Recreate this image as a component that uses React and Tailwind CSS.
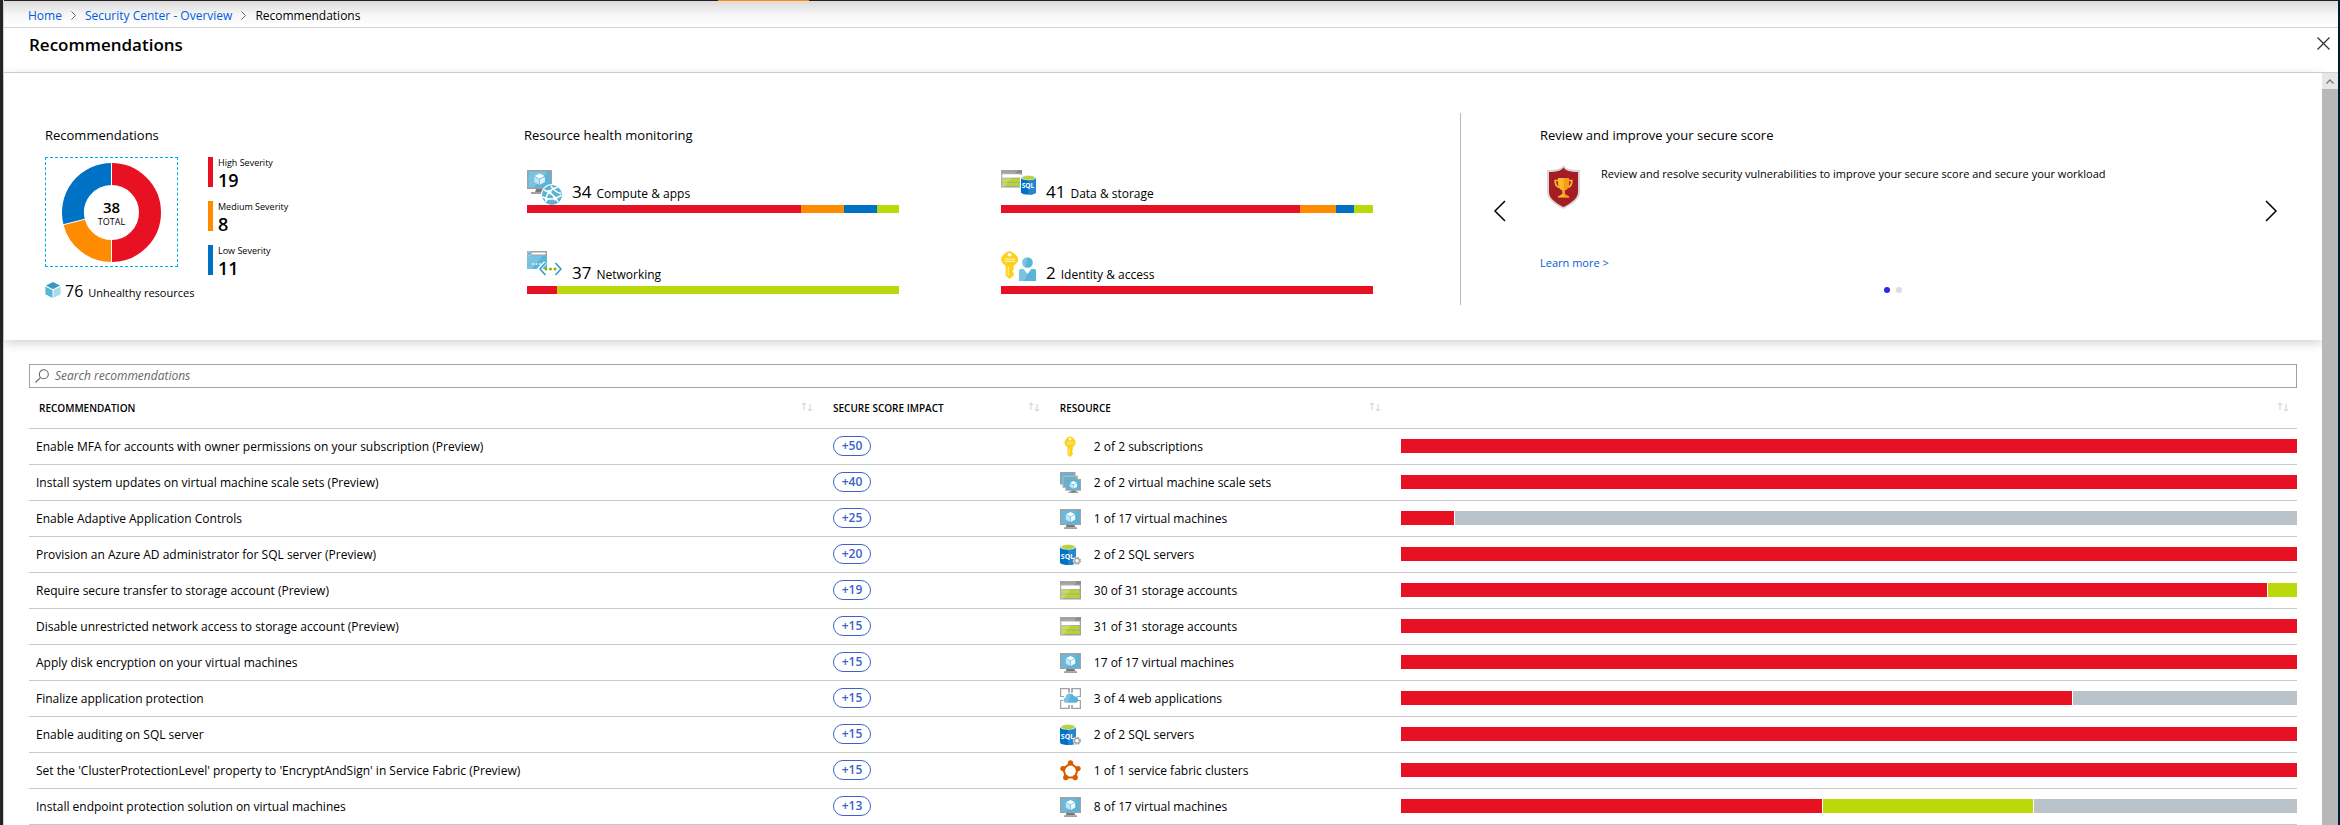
import React from "react";

const RED = "#e81123";
const ORANGE = "#ff8c00";
const BLUE = "#0072c6";
const GREEN = "#bad80a";
const GRAY = "#bac2ca";

function Cube({ x = 0, y = 0, s = 1, top = "#3999c6", left = "#59b4d9", right = "#a8d9ed" }) {
  return (
    <g transform={`translate(${x} ${y}) scale(${s})`}>
      <path d="M8 0L15 3.6L8 7.2L1 3.6Z" fill={top} />
      <path d="M0.4 4.6L7.5 8.2V16L0.4 12.2Z" fill={left} />
      <path d="M15.6 4.6L8.5 8.2V16L15.6 12.2Z" fill={right} />
    </g>
  );
}

function Monitor() {
  return (
    <g>
      <path d="M6.5 17h8l1 2.4H5.5Z" fill="#7a7a7a" />
      <rect x="4" y="19.3" width="13" height="1.7" fill="#a0a1a2" />
      <rect x="0" y="1" width="21" height="16" fill="#a0a1a2" />
      <rect x="1.5" y="2.5" width="18" height="13" fill="#59b4d9" />
      <path d="M1.5 2.5H16L6 15.5H1.5Z" fill="#fff" opacity="0.1" />
      <Cube x={5.5} y={4} s={0.62} top="#fff" left="#c5e5f3" right="#f2fafd" />
    </g>
  );
}

function StorageShape() {
  return (
    <g>
      <rect x="0" y="1" width="21" height="18.5" fill="#a0a1a2" />
      <rect x="0" y="1" width="21" height="3.5" fill="#8b8d8f" />
      <rect x="1.3" y="5.5" width="18.4" height="3.6" fill="#fff" />
      <rect x="1.3" y="10" width="18.4" height="3.6" fill="#b8d432" />
      <rect x="1.3" y="14.4" width="18.4" height="3.6" fill="#b8d432" />
      <path d="M0 1H17L3 19.5H0Z" fill="#fff" opacity="0.2" />
    </g>
  );
}

function SqlShape() {
  return (
    <g>
      <path d="M0 3v15.5c0 1.4 3.5 2.5 8 2.5s8-1.1 8-2.5V3Z" fill="#0072c6" />
      <path d="M8 3v18c4.500 0 8-1.100 8-2.500V3Z" fill="#2685d0" />
      <ellipse cx="8" cy="3" rx="8" ry="2.700" fill="#e8f0f7" />
      <ellipse cx="8" cy="3" rx="6.700" ry="2.200" fill="#b8d432" />
      <text x="7.500" y="14.500" textAnchor="middle" fontSize="7" fontWeight="700" fill="#fff">
        SQL
      </text>
    </g>
  );
}

function KeyShape() {
  return (
    <g>
      <path d="M10 0.300c3 1.300 5.300 3.300 5.700 6.300c0 2.200-1.500 3.400-3 4.600v3.200l-.9 1l.9 1v2l-2.200 2.300h-1L7.500 18.500V11.200C6 10 4.500 8.800 4.500 6.600C4.900 3.600 7 1.600 10 .3Z" fill="#fcd116" />
      <circle cx="10" cy="3" r="1.300" fill="#fff" />
      <path d="M6.700 6.300h7M6.700 8h7M9.200 11.500v7" stroke="#fff" strokeWidth="0.800" opacity="0.650" />
    </g>
  );
}

function ResourceIcon({ kind }) {
  return (
    <svg width="21" height="21" viewBox="0 0 21 21" className="shrink-0" aria-hidden="true">
      {kind === "key" && <KeyShape />}
      {kind === "vm" && <Monitor />}
      {kind === "storage" && <StorageShape />}
      {kind === "scale" && (
        <g>
          <rect x="0" y="0" width="15.500" height="12.500" fill="#a0a1a2" />
          <rect x="1" y="1.500" width="13.500" height="9.800" fill="#59b4d9" />
          <rect x="2.500" y="3.500" width="15.500" height="12.500" fill="#b8babb" />
          <rect x="3.500" y="4.800" width="13.500" height="10" fill="#59b4d9" />
          <rect x="5.500" y="7" width="15.500" height="11.700" fill="#a0a1a2" />
          <rect x="6.700" y="8.200" width="13.100" height="9.300" fill="#59b4d9" />
          <path d="M11.500 18.500h4l.8 1.300h2v1H8.500v-1h2.200Z" fill="#7a7a7a" />
          <Cube x={9.600} y={9} s={0.480} top="#fff" left="#c5e5f3" right="#f2fafd" />
        </g>
      )}
      {kind === "sql" && (
        <g>
          <SqlShape />
          <circle cx="17" cy="16.800" r="4.200" fill="#fff" />
          <circle cx="17" cy="16.800" r="3.300" fill="none" stroke="#a0a1a2" strokeWidth="1.500" strokeDasharray="1.500 1.090" />
          <circle cx="17" cy="16.800" r="2.400" fill="#fff" stroke="#a0a1a2" strokeWidth="1.200" />
        </g>
      )}
      {kind === "web" && (
        <g>
          <path d="M0.600 8V.6H9V5M12 5V.6h8.400V8M.6 13v7.400H9V17M12 17v3.400h8.400V13" fill="none" stroke="#a0a1a2" strokeWidth="1.200" />
          <path d="M0 8.500h4M17 8.500h4M0 12.500h3M18 12.500h3M9 0v4M12 0v4M9 21v-4M12 21v-4" stroke="#a0a1a2" strokeWidth="1.200" />
          <path d="M6 14.800a2.700 2.700 0 0 1-.3-5.300a4.300 4.300 0 0 1 8.300-1.200a3.300 3.300 0 0 1 1.600 6.500Z" fill="#59b4d9" />
          <path d="M6 14.800a2.700 2.700 0 0 1-.3-5.300a4.300 4.300 0 0 1 5.300-3.800L8 14.800Z" fill="#fff" opacity="0.200" />
        </g>
      )}
      {kind === "fabric" && (
        <g fill="#dd5900">
          <path d="M10.500 3.200L17.800 8.700L15 17.500H6L3.200 8.700Z" fill="none" stroke="#dd5900" strokeWidth="2" />
          <circle cx="10.500" cy="3" r="2.700" />
          <circle cx="18" cy="8.600" r="2.700" />
          <circle cx="15.200" cy="17.500" r="2.700" />
          <circle cx="5.800" cy="17.500" r="2.700" />
          <circle cx="3" cy="8.600" r="2.700" />
        </g>
      )}
    </svg>
  );
}

function HealthIcon({ kind }) {
  return (
    <svg width="35" height="35" viewBox="0 0 35 35" className="shrink-0" aria-hidden="true">
      {kind === "compute" && (
        <g>
          <path d="M9.500 18h7l1.500 4H8Z" fill="#7a7a7a" />
          <rect x="4" y="22" width="14" height="2" fill="#a0a1a2" />
          <rect x="0" y="0" width="25" height="19" fill="#a0a1a2" />
          <rect x="1.500" y="1.500" width="22" height="16" fill="#59b4d9" />
          <path d="M1.500 1.500H20L7 17.500H1.500Z" fill="#fff" opacity="0.200" />
          <Cube x={7} y={3.500} s={0.7} top="#fff" left="#bfe2f2" right="#def0f8" />
          <circle cx="25" cy="25" r="11" fill="#fff" />
          <circle cx="25" cy="25" r="10" fill="#59b4d9" />
          <path d="M17 20c5 1.500 12 7 14 12M19 32c-1-7 4-13 12-15M15.500 27c5 3 13 3 19-2M24 15.500c1 3 5 7 10 8" fill="none" stroke="#fff" strokeWidth="1.500" />
          <circle cx="22.500" cy="22" r="2.200" fill="#fff" />
          <circle cx="28" cy="28.500" r="1.900" fill="#fff" />
          <circle cx="20" cy="29" r="1.500" fill="#fff" />
        </g>
      )}
      {kind === "network" && (
        <g>
          <rect x="0" y="0" width="20" height="18" fill="#59b4d9" />
          <path d="M0 4H16L5 18H0Z" fill="#fff" opacity="0.200" />
          <rect x="0" y="0" width="20" height="4.500" fill="#a0a1a2" />
          <rect x="5" y="1.500" width="13.500" height="2" fill="#fff" />
          <circle cx="2.500" cy="2.600" r="2" fill="#59b4d9" stroke="#d6ecf5" strokeWidth="0.600" />
          <path d="M5 13h1.700M8.500 13h1.700M12 13h1.700" stroke="#fff" strokeWidth="1.700" />
          <path d="M18.500 11.500L12.500 18L18.500 24.500" fill="none" stroke="#fff" strokeWidth="4" />
          <path d="M18.500 12L13 18L18.500 24M28.500 12L34 18L28.500 24" fill="none" stroke="#3999c6" strokeWidth="1.600" />
          <circle cx="19" cy="18" r="1.500" fill="#7fba00" />
          <circle cx="23.500" cy="18" r="1.500" fill="#7fba00" />
          <circle cx="28" cy="18" r="1.500" fill="#7fba00" />
        </g>
      )}
      {kind === "data" && (
        <g>
          <g transform="translate(0 -1) scale(1 0.950)">
            <StorageShape />
          </g>
          <rect x="19" y="5" width="16" height="20" fill="#fff" />
          <g transform="translate(20 5) scale(0.930)">
            <SqlShape />
          </g>
        </g>
      )}
      {kind === "identity" && (
        <g>
          <g transform="translate(-6.800 -0.400) scale(1.530 1.350)">
            <KeyShape />
          </g>
          <circle cx="26.500" cy="11.500" r="5.300" fill="#59b4d9" />
          <path d="M18 30V20c0-1.500 1-2 2-2h2.500l4 5l4-5H33c1.500 0 2 .8 2 2v10Z" fill="#59b4d9" />
          <path d="M18 30V20c0-1.500 1-2 2-2h2.500l4 5L23.500 30ZM26.500 6.200a5.300 5.300 0 0 0-2 10.200Z" fill="#fff" opacity="0.200" />
        </g>
      )}
    </svg>
  );
}

function Donut() {
  const cx = 49.5;
  const r = 38.5;
  const slices = [
    { value: 19, color: RED },
    { value: 8, color: ORANGE },
    { value: 11, color: BLUE },
  ];
  const total = 38;
  const point = (v, radius) => {
    const a = (v / total) * Math.PI * 2 - Math.PI / 2;
    return [cx + radius * Math.cos(a), cx + radius * Math.sin(a)];
  };
  let at = 0;
  const parts = slices.map(({ value, color }) => {
    const [x1, y1] = point(at, r);
    const [gx1, gy1] = point(at, 26);
    const [gx2, gy2] = point(at, 50);
    at += value;
    const [x2, y2] = point(at, r);
    return { color, d: `M${x1} ${y1}A${r} ${r} 0 0 1 ${x2} ${y2}`, gap: `M${gx1} ${gy1}L${gx2} ${gy2}` };
  });
  return (
    <svg width="99" height="99" viewBox="0 0 99 99" role="img" aria-label="38 recommendations in total">
      {parts.map((p) => (
        <path key={p.color} d={p.d} fill="none" stroke={p.color} strokeWidth="22" />
      ))}
      {parts.map((p) => (
        <path key={p.gap} d={p.gap} stroke="#fff" strokeWidth="1" />
      ))}
      <text x="49.500" y="50" textAnchor="middle" fontSize="15" fontWeight="600">38</text>
      <text x="49.500" y="62" textAnchor="middle" fontSize="9">TOTAL</text>
    </svg>
  );
}

function Shield() {
  return (
    <svg width="33" height="44" viewBox="0 0 33 44" className="shrink-0" aria-hidden="true">
      <path d="M16.500 0C18 3 22 5 33 5V27C33 35 24 40 16.500 44C9 40 0 35 0 27V5C11 5 15 3 16.500 0Z" fill="#d4d6d8" />
      <path d="M16.500 2.500C18.500 5.500 23 7 31 7V27C31 34 23 38.500 16.500 42C10 38.500 2 34 2 27V7C10 7 14.500 5.500 16.500 2.500Z" fill="#a51d24" />
      <path d="M11.500 15.500H8.200c0 5 1.800 7 5 7M21.500 15.500h3.300c0 5-1.800 7-5 7" fill="none" stroke="#fdb92e" strokeWidth="1.700" />
      <path d="M11 13h11v5c0 4-1.500 6.500-4.300 7.300V29l3.300 2H22v1.500H11V31h1l3.300-2v-3.700C12.500 24.500 11 22 11 18Z" fill="#fdb92e" />
      <path d="M16.500 13H22v5c0 4-1.500 6.500-4.300 7.300V29l3.300 2H22v1.500h-5.500Z" fill="#f59d1a" />
    </svg>
  );
}

function Chevron({ left }) {
  return (
    <svg width="14" height="22" viewBox="0 0 14 22" fill="none" stroke="#000" strokeWidth="1.500" aria-hidden="true">
      <path d={left ? "M12 1L2 11L12 21" : "M2 1L12 11L2 21"} />
    </svg>
  );
}

function SortButton({ label }) {
  return (
    <button type="button" aria-label={`Sort by ${label}`} className="mr-5 mb-1.5">
      <svg width="12" height="10" viewBox="0 0 12 10" fill="none" stroke="#cfcfcf" strokeWidth="1" aria-hidden="true">
        <path d="M3 8V1M0.800 3L3 .8L5.200 3M9 2V9M6.800 7L9 9.200L11.200 7" />
      </svg>
    </button>
  );
}

function Bar({ parts, className }) {
  return (
    <div className={className}>
      {parts.map(([value, color], i) => (
        <div key={i} style={{ flexGrow: value, flexBasis: 0, backgroundColor: color }} />
      ))}
    </div>
  );
}

const severities = [
  ["High Severity", 19, "bg-[#e81123]"],
  ["Medium Severity", 8, "bg-[#ff8c00]"],
  ["Low Severity", 11, "bg-[#0072c6]"],
];

const health = [
  ["compute", 34, "Compute & apps", [[274, RED], [43, ORANGE], [33, BLUE], [22, GREEN]]],
  ["data", 41, "Data & storage", [[300, RED], [36, ORANGE], [18, BLUE], [19, GREEN]]],
  ["network", 37, "Networking", [[30, RED], [342, GREEN]]],
  ["identity", 2, "Identity & access", [[1, RED]]],
];

const rows = [
  ["Enable MFA for accounts with owner permissions on your subscription (Preview)", "+50", "key", "2 of 2 subscriptions", [[1, RED]]],
  ["Install system updates on virtual machine scale sets (Preview)", "+40", "scale", "2 of 2 virtual machine scale sets", [[1, RED]]],
  ["Enable Adaptive Application Controls", "+25", "vm", "1 of 17 virtual machines", [[1, RED], [16, GRAY]]],
  ["Provision an Azure AD administrator for SQL server (Preview)", "+20", "sql", "2 of 2 SQL servers", [[1, RED]]],
  ["Require secure transfer to storage account (Preview)", "+19", "storage", "30 of 31 storage accounts", [[30, RED], [1, GREEN]]],
  ["Disable unrestricted network access to storage account (Preview)", "+15", "storage", "31 of 31 storage accounts", [[1, RED]]],
  ["Apply disk encryption on your virtual machines", "+15", "vm", "17 of 17 virtual machines", [[1, RED]]],
  ["Finalize application protection", "+15", "web", "3 of 4 web applications", [[3, RED], [1, GRAY]]],
  ["Enable auditing on SQL server", "+15", "sql", "2 of 2 SQL servers", [[1, RED]]],
  ["Set the 'ClusterProtectionLevel' property to 'EncryptAndSign' in Service Fabric (Preview)", "+15", "fabric", "1 of 1 service fabric clusters", [[1, RED]]],
  ["Install endpoint protection solution on virtual machines", "+13", "vm", "8 of 17 virtual machines", [[8, RED], [4, GREEN], [5, GRAY]]],
];

function CrumbArrow() {
  return (
    <svg width="5" height="9" viewBox="0 0 5 9" fill="none" stroke="#666" strokeWidth="1" aria-hidden="true">
      <path d="M0.500 0.500L4.500 4.500L0.500 8.500" />
    </svg>
  );
}

function Header() {
  return (
    <header>
      <div className="flex h-px bg-[#231f20]">
        <div className="w-[30.6%]" />
        <div className="w-[91px] bg-[#ff8c00]" />
      </div>
      <nav aria-label="Breadcrumb" className="flex h-[27px] items-center gap-[9px] border-b border-[#d2d2d2] bg-linear-to-b from-[#dcdadb] via-[#f6f6f6] to-white pt-[3px] pl-6 text-[12px]">
        <a href="#home" className="text-[#015cda]">Home</a>
        <CrumbArrow />
        <a href="#overview" className="text-[#015cda]">Security Center - Overview</a>
        <CrumbArrow />
        <span>Recommendations</span>
      </nav>
      <div className="flex h-[45px] items-start justify-between border-b border-[#d2d2d2] pt-[3px] pr-1 pl-[25px]">
        <h1 className="text-[17px] leading-7 font-semibold">Recommendations</h1>
        <button type="button" aria-label="Close" className="p-1 pt-[6px]">
          <svg width="13" height="13" viewBox="0 0 13 13" stroke="#333" strokeWidth="1.300" aria-hidden="true">
            <path d="M0.500 0.500L12.500 12.500M12.500 .5L.5 12.500" />
          </svg>
        </button>
      </div>
    </header>
  );
}

function Summary() {
  return (
    <section className="grid h-[267px] grid-cols-[479fr_936fr_862fr] pt-10 pl-[41px] shadow-[0_3px_10px_rgba(0,0,0,0.180)]">
      <div className="pt-3">
        <h2 className="text-[13px] leading-5">Recommendations</h2>
        <div className="mt-3 flex gap-[30px]">
          <div className="w-[133px]">
            <a href="#all" className="flex h-[110px] items-center justify-center border border-dashed border-[#00abec]">
              <Donut />
            </a>
            <div className="mt-3 flex items-center gap-1 whitespace-nowrap">
              <svg width="16" height="16" viewBox="0 0 16 16" className="mb-1 shrink-0" aria-hidden="true">
                <Cube />
              </svg>
              <span className="flex items-baseline gap-[5px] leading-6">
                <span className="text-[16px] font-medium">76</span>
                <span className="text-[11px]">Unhealthy resources</span>
              </span>
            </div>
          </div>
          <ul className="flex flex-col gap-[14px]">
            {severities.map(([label, count, color]) => (
              <li key={label} className="flex h-[30px] gap-[5px]">
                <span className={`w-[5px] ${color}`} />
                <span className="flex flex-col">
                  <span className="text-[9px] leading-3">{label}</span>
                  <span className="text-[18px] leading-[22px] font-semibold">{count}</span>
                </span>
              </li>
            ))}
          </ul>
        </div>
      </div>

      <div className="pt-3">
        <h2 className="text-[13px] leading-5">Resource health monitoring</h2>
        <div className="mt-[25px] mr-[87px] ml-[3px] grid grid-cols-2 gap-x-[102px] gap-y-[38px]">
          {health.map(([icon, count, label, parts]) => (
            <a href={`#${icon}`} key={icon} className="block">
              <span className="flex h-[35px] gap-[10px]">
                <HealthIcon kind={icon} />
                <span className="flex items-baseline gap-[5px] pt-3 leading-5">
                  <span className="text-[17px]">{count}</span>
                  <span className="text-[12px]">{label}</span>
                </span>
              </span>
              <Bar parts={parts} className="flex h-2" />
            </a>
          ))}
        </div>
      </div>

      <div className="flex h-[192px] items-center border-l border-[#b8b8b8] pl-8">
        <button type="button" aria-label="Previous" className="pt-1">
          <Chevron left />
        </button>
        <div className="ml-[33px] flex h-full flex-1 flex-col pt-3">
          <h2 className="text-[13px] leading-5">Review and improve your secure score</h2>
          <div className="mt-5 ml-[7px] flex h-[88px] gap-[21px] text-[11px]">
            <Shield />
            <p className="leading-[18px]">Review and resolve security vulnerabilities to improve your secure score and secure your workload</p>
          </div>
          <a href="#learn" className="self-start text-[11px] leading-5 text-[#015cda]">Learn more &gt;</a>
          <div className="mt-[14px] mr-[18px] flex justify-center gap-[6px]">
            <button type="button" aria-label="Slide 1" className="size-[6px] rounded-full bg-[#2b2bdc]" />
            <button type="button" aria-label="Slide 2" className="size-[6px] rounded-full bg-[#dcdcdc]" />
          </div>
        </div>
        <button type="button" aria-label="Next" className="pt-1 pr-[44px]">
          <Chevron />
        </button>
      </div>
    </section>
  );
}

function RecommendationTable() {
  const heads = ["Recommendation", "Secure score impact", "Resource", ""];
  return (
    <section className="px-[25px] pt-6">
      <label className="flex h-6 items-center gap-[6px] border border-[#a0a0a0] pl-[5px]">
        <svg width="14" height="14" viewBox="0 0 14 14" fill="none" stroke="#666" strokeWidth="1.100" aria-hidden="true">
          <circle cx="8.800" cy="5.200" r="4.500" />
          <path d="M5.600 8.400L0.500 13.500" />
        </svg>
        <input type="text" aria-label="Search recommendations" placeholder="Search recommendations" className="min-w-0 flex-1 text-[12px] leading-5 outline-none placeholder:text-[#666] placeholder:italic" />
      </label>
      <table className="w-full table-fixed border-collapse">
        <colgroup>
          <col className="w-[35.45%]" />
          <col className="w-[10%]" />
          <col className="w-[15.05%]" />
          <col />
        </colgroup>
        <thead>
          <tr className="h-10 border-b border-[#c8c8c8]">
            {heads.map((h, i) => (
              <th key={i} className={i === 0 ? "p-0 pl-[10px]" : "p-0"}>
                <span className="flex items-center justify-between text-[10px] leading-5 font-semibold uppercase">
                  <span>{h}</span>
                  <span className={i === 3 ? "-mr-3" : ""}>
                    <SortButton label={h || "health"} />
                  </span>
                </span>
              </th>
            ))}
          </tr>
        </thead>
        <tbody>
          {rows.map(([name, score, icon, resource, parts]) => (
            <tr key={name} className="h-9 border-b border-[#c8c8c8] text-[12px] font-medium">
              <td className="truncate p-0 pt-px pl-[7px]">{name}</td>
              <td className="p-0">
                <span className="flex h-5 w-[38px] items-center justify-center rounded-full border border-[#3b62c8] text-[12px] font-semibold text-[#3b62c8]">{score}</span>
              </td>
              <td className="p-0 pt-px">
                <span className="flex items-center gap-[13px] whitespace-nowrap">
                  <ResourceIcon kind={icon} />
                  {resource}
                </span>
              </td>
              <td className="p-0">
                <Bar parts={parts} className="flex h-[14px] gap-px" />
              </td>
            </tr>
          ))}
        </tbody>
      </table>
    </section>
  );
}

export default function App() {
  return (
    <div className="min-h-screen border-r-2 border-[#001a3a] bg-[#252525] pl-[3px] font-['Open_Sans','Noto_Sans',sans-serif] text-black">
      <div className="flex min-h-screen flex-col border-l border-[#d2d2d2] bg-white">
        <Header />
        <div className="flex flex-1">
          <main className="min-w-0 flex-1">
            <Summary />
            <RecommendationTable />
          </main>
          <div className="flex w-4 flex-col bg-[#b8b8b8]">
            <button type="button" aria-label="Scroll up" className="flex h-4 items-center justify-center bg-[#e6e6e6]">
              <svg width="8" height="5" viewBox="0 0 8 5" fill="none" stroke="#777" strokeWidth="1.300" aria-hidden="true">
                <path d="M0.500 4.500L4 1L7.500 4.500" />
              </svg>
            </button>
          </div>
        </div>
      </div>
    </div>
  );
}
